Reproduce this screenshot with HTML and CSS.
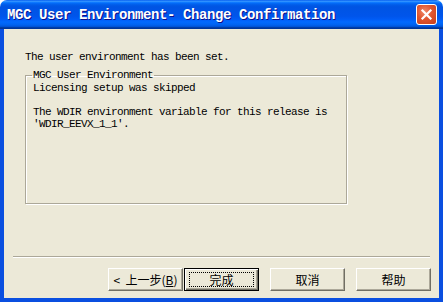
FILE: index.html
```html
<!DOCTYPE html>
<html lang="zh">
<head>
  <meta charset="UTF-8">
  <title>MGC User Environment- Change Confirmation</title>
  <link rel="stylesheet" href="styles.css">
</head>
<body>
  <div class="window">
    <!-- Title bar -->
    <div class="titlebar">
      <span class="title">MGC User Environment- Change Confirmation</span>
      <span class="close">
        <svg width="19" height="19" viewBox="0 0 19 19">
          <path d="M5.5 5.5 L13.5 13.5 M13.5 5.5 L5.5 13.5" stroke="#fff" stroke-width="2.2" stroke-linecap="square"/>
        </svg>
      </span>
    </div>

    <div class="frame">
      <div class="content">
        <p class="msg">The user environment has been set.</p>
        <fieldset class="group">
          <legend>MGC User Environment</legend>
          <div class="group-body">Licensing setup was skipped<br><br>The WDIR environment variable for this release is<br>'WDIR_EEVX_1_1'.</div>
        </fieldset>
      </div>

      <!-- Wizard buttons -->
      <div class="footer">
        <div class="sep"></div>
        <div class="buttons">
          <button class="btn">&lt;&nbsp; 上一步(<u>B</u>)</button>
          <button class="btn default"><span class="focus">完成</span></button>
          <button class="btn">取消</button>
          <button class="btn">帮助</button>
        </div>
      </div>
    </div>
  </div>
</body>
</html>
```

FILE: styles.css
```css
body {
  margin: 0;
  background: #fff;
}
.window {
  width: 443px;
  height: 302px;
  display: flex;
  flex-direction: column;
  border-radius: 7px 7px 0 0;
  overflow: hidden;
}
.titlebar {
  height: 29px;
  flex: none;
  display: flex;
  align-items: center;
  justify-content: space-between;
  padding: 0 6px 0 7px;
  background: linear-gradient(180deg, #0058ee 0%, #3593ff 4%, #288eff 6%, #127dff 8%, #036ffc 10%, #0262ee 14%, #0057e5 20%, #0054e3 24%, #0055eb 56%, #005bf5 66%, #026afe 76%, #0062ef 86%, #0052d6 92%, #0040ab 94%, #003092 100%);
}
.title {
  color: #fff;
  font-family: "Liberation Mono", monospace;
  font-weight: bold;
  font-size: 14px;
  letter-spacing: -0.4px;
  text-shadow: 1px 1px #0f1089;
  white-space: nowrap;
}
.close {
  width: 21px;
  height: 21px;
  box-sizing: border-box;
  border: 1px solid #fff;
  border-radius: 3px;
  background: radial-gradient(circle at 40% 35%, #f08a6a 0%, #e0552f 45%, #c73e1a 100%);
  display: flex;
  align-items: center;
  justify-content: center;
}
.frame {
  flex: 1;
  display: flex;
  flex-direction: column;
  background: #ece9d8;
  border: 4px solid #0a4fe0;
  border-top: 0;
}
.content {
  padding: 22px 0 0 21px;
  font-family: "Liberation Mono", monospace;
  font-size: 11px;
  letter-spacing: -0.6px;
  line-height: 12px;
  color: #000;
}
.msg {
  margin: 0;
}
.group {
  margin: 6px 0 0;
  padding: 0 7px;
  width: 322px;
  box-sizing: border-box;
  border: 1px solid #aca899;
  box-shadow: inset 1px 1px #fff, 1px 1px #fff;
}
.group legend {
  padding: 0 1px;
  margin-left: -1px;
}
.group-body {
  padding-top: 1px;
  height: 121px;
  white-space: nowrap;
}
.footer {
  margin-top: auto;
  padding: 0 8px 7px 9px;
}
.sep {
  height: 1px;
  background: #aca899;
  border-bottom: 1px solid #fff;
  margin-right: 1px;
}
.buttons {
  display: flex;
  justify-content: flex-end;
  margin-top: 10px;
  gap: 11px;
}
.btn {
  width: 75px;
  height: 23px;
  box-sizing: border-box;
  padding: 0;
  font-family: "Noto Sans CJK SC", sans-serif;
  font-size: 12px;
  color: #000;
  background: #ece9d8;
  border: 1px solid;
  border-color: #fff #716f64 #716f64 #fff;
  box-shadow: inset -1px -1px #aca899;
  display: flex;
  align-items: center;
  justify-content: center;
}
.btn.default {
  margin-left: -10px;
  border: 1px solid #000;
  box-shadow: inset 1px 1px #fff, inset -1px -1px #716f64, inset -2px -2px #aca899;
}
.focus {
  width: 65px;
  height: 15px;
  border: 1px dotted #000;
  box-sizing: border-box;
  display: flex;
  align-items: center;
  justify-content: center;
}
```
